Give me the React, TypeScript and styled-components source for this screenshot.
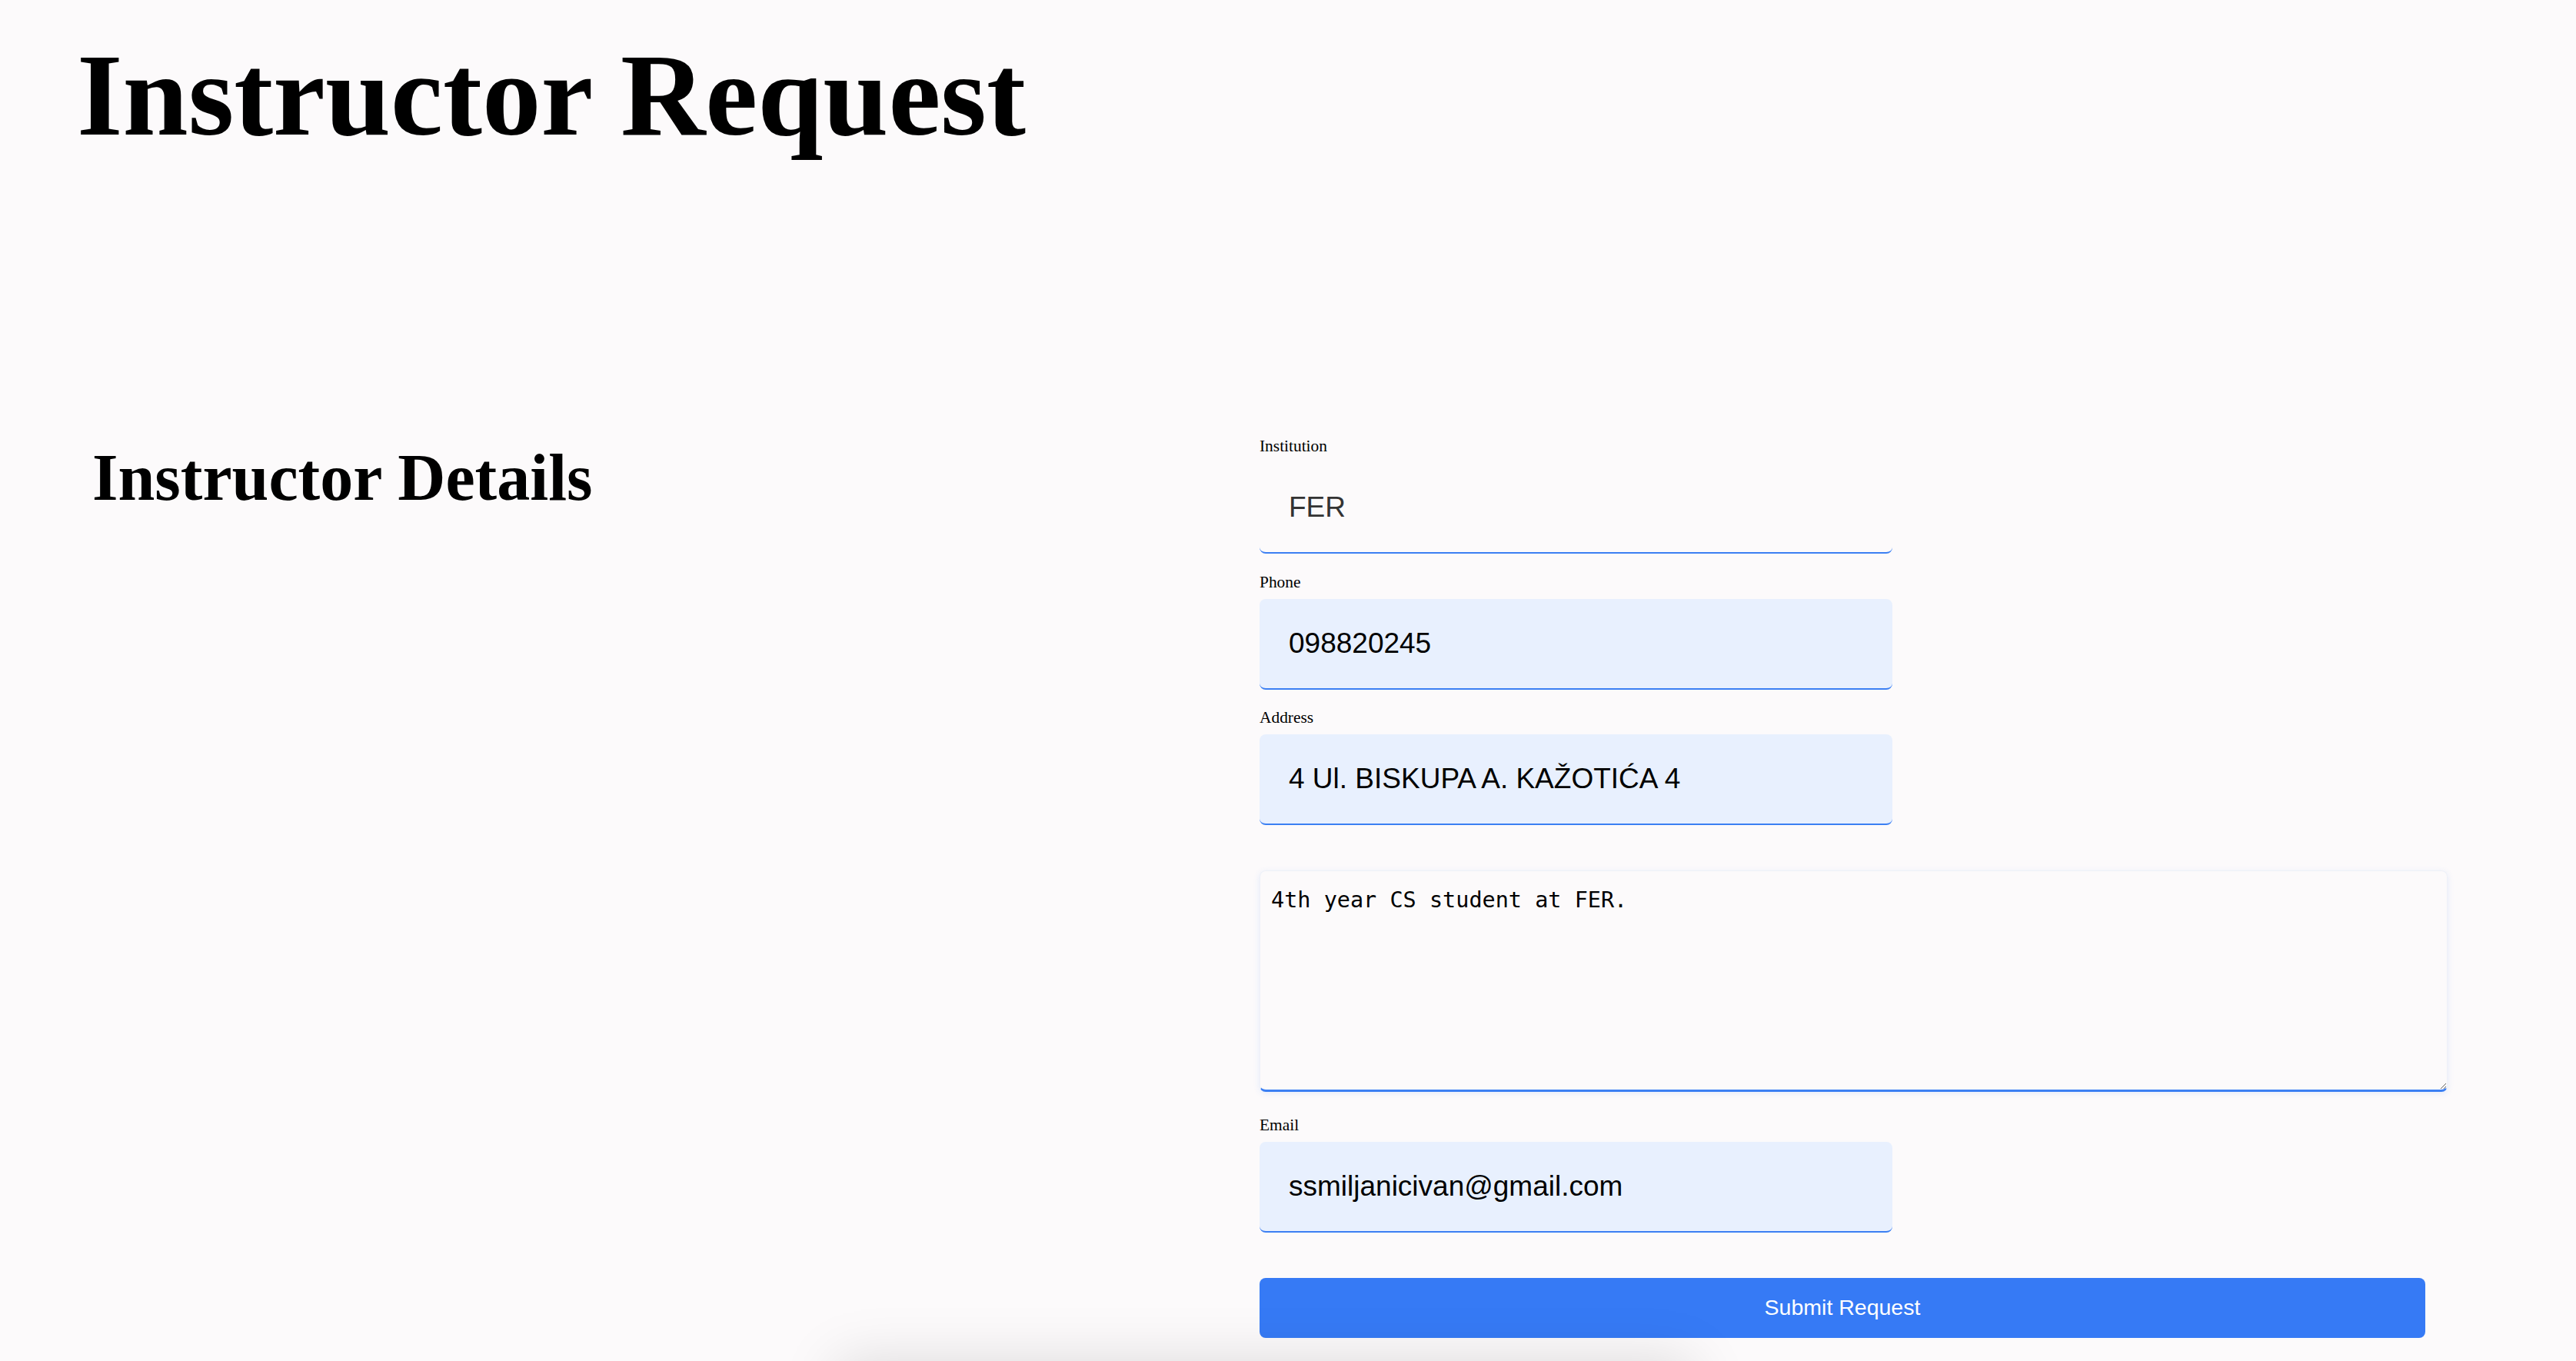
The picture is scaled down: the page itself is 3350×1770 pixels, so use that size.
import { useEffect, useRef } from "react";
import styled, { createGlobalStyle } from "styled-components";

const bio = "4th year CS student at FER.";

const InstructorRequest = () => {
	const bioRef = useRef<HTMLTextAreaElement>(null);

	useEffect(() => {
		const el = bioRef.current;
		if (!el) return;
		el.focus();
		el.setSelectionRange(bio.length, bio.length);
	}, []);

	return (<Page>
		<GlobalStyle />
		<PageTitle>Instructor Request</PageTitle>
		<Content>
			<SectionTitle>Instructor Details</SectionTitle>
			<Form onSubmit={e => e.preventDefault()}>
				<Field>
					<Label>Institution</Label>
					<Input type="text" defaultValue="FER" />
				</Field>
				<Field>
					<Label>Phone</Label>
					<Input $filled type="text" defaultValue="098820245" />
				</Field>
				<Field>
					<Label>Address</Label>
					<Input $filled type="text" defaultValue="4 Ul. BISKUPA A. KAŽOTIĆA 4" />
				</Field>
				<Field>
					<Label />
					<Bio ref={bioRef} defaultValue={bio} />
				</Field>
				<Field>
					<Label>Email</Label>
					<Input $filled type="email" defaultValue="ssmiljanicivan@gmail.com" />
				</Field>
				<SubmitButton type="submit">Submit Request</SubmitButton>
			</Form>
		</Content>
		<BottomCard />
	</Page>);
};

const GlobalStyle = createGlobalStyle`
	body {
		margin: 0;
		background-color: #fcfafb;
		font-family: "Liberation Serif", "Times New Roman", serif;
		color: #000;
	}
`;

const Page = styled.div`
	display: flex;
	flex-direction: column;
	overflow: hidden;
`;

const PageTitle = styled.h1`
	margin: 47px 0 368px 100px;
	font-size: 153px;
	line-height: 1;
	font-weight: 700;
`;

const Content = styled.div`
	display: grid;
	grid-template-columns: 1518px 1fr;
	padding-left: 120px;
`;

const SectionTitle = styled.h2`
	margin: 10px 0 0;
	font-size: 86px;
	line-height: 1;
	font-weight: 700;
`;

const Form = styled.form`
	display: flex;
	flex-direction: column;
	align-items: flex-start;
	gap: 24.5px;
`;

const Field = styled.div`
	display: flex;
	flex-direction: column;
`;

const Label = styled.label`
	display: block;
	height: 24px;
	margin-bottom: 10px;
	font-size: 21.4px;
	line-height: 24px;
`;

const Input = styled.input<{ $filled?: boolean }>`
	width: 823px;
	height: 118px;
	box-sizing: border-box;
	padding: 0 38px;
	border: none;
	border-bottom: 2px solid #3b7ff3;
	border-radius: 8px;
	background-color: ${({ $filled }) => $filled ? "#e8f0fe" : "transparent"};
	color: ${({ $filled }) => $filled ? "#000" : "#333"};
	font-family: "Liberation Sans", Arial, sans-serif;
	font-size: 37px;
	outline: none;
`;

const Bio = styled.textarea`
	display: block;
	width: 1545px;
	height: 288px;
	box-sizing: border-box;
	margin-bottom: 7px;
	padding: 21px 14px;
	border: 1px solid #eef1f8;
	border-bottom: 3px solid #3b7ff3;
	border-radius: 8px;
	background-color: #fcfafb;
	box-shadow: 0 2px 8px rgba(59, 127, 243, 0.12);
	font-family: "DejaVu Sans Mono", "Liberation Mono", monospace;
	font-size: 28.5px;
	color: #000;
	caret-color: #000;
	outline: none;
`;

const SubmitButton = styled.button`
	width: 1516px;
	height: 78px;
	margin-top: 34px;
	border: none;
	border-radius: 8px;
	background-color: #367af5;
	color: #fff;
	font-family: "Liberation Sans", Arial, sans-serif;
	font-size: 28.5px;
	cursor: pointer;
`;

const BottomCard = styled.div`
	width: 1090px;
	height: 300px;
	margin: 42px 0 0 1100px;
	background-color: #fcfafb;
	box-shadow: 0 0 70px 12px rgba(0, 0, 0, 0.13);
`;

export default InstructorRequest;
